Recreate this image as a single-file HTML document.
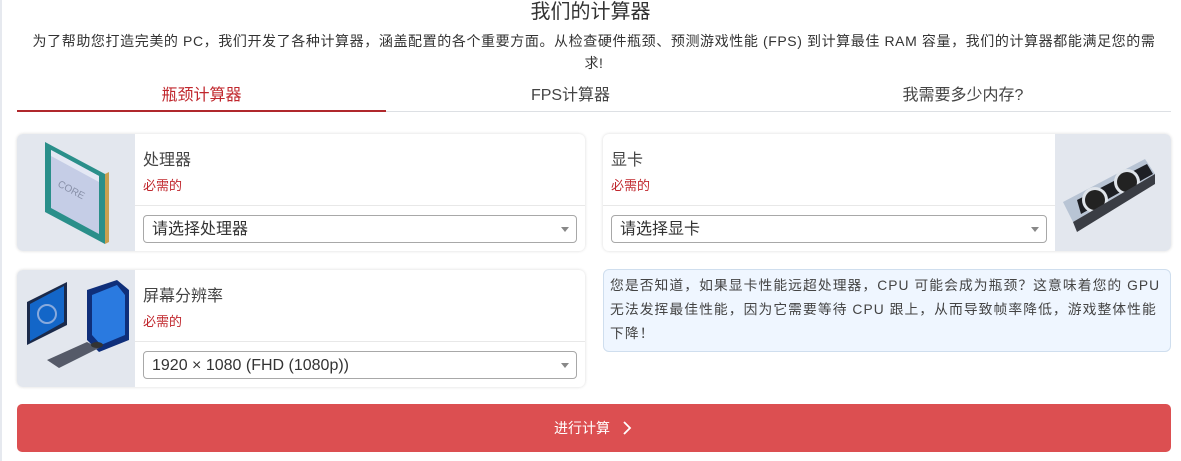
<!DOCTYPE html>
<html><head><meta charset="utf-8"><style>
*{box-sizing:border-box;margin:0;padding:0}
body{width:1181px;height:461px;overflow:hidden;background:#fff;font-family:"Liberation Sans","Noto Sans CJK SC",sans-serif;color:#333;position:relative}
.edge{position:absolute;left:0;top:0;width:2px;height:461px;background:#e6e9ef}
.title{position:absolute;top:0;left:0;width:1181px;text-align:center;font-size:20px;line-height:24px;color:#333}
.sub{position:absolute;top:30px;left:25px;width:1138px;text-align:center;font-size:14px;line-height:22px;color:#333;letter-spacing:0.6px}
.tabs{position:absolute;top:82px;left:17px;width:1154px;height:30px;border-bottom:1px solid #dde0e4;display:flex}
.tab{text-align:center;font-size:16px;line-height:28px;color:#444}
.tab.a{color:#c0272d;border-bottom:2px solid #b0282c;margin-bottom:-1px}
.card{position:absolute;width:568px;height:117px;border-radius:6px;background:#fff;box-shadow:0 0 3px rgba(0,0,0,.15);overflow:hidden}
.img{position:absolute;top:0;width:118px;height:117px;background:#e3e7ee}
.body{position:absolute;top:0;height:117px}
.lab{position:absolute;top:12px;left:8px;font-size:16px;color:#444}
.req{position:absolute;top:41px;left:8px;font-size:13px;color:#c0272d}
.div{position:absolute;top:71px;left:0;right:0;height:1px;background:#e8e8e8}
.sel{position:absolute;top:81px;left:8px;right:8px;height:28px;border:1px solid #a8a8a8;border-radius:4px;font-size:16px;line-height:28px;padding-left:8px;color:#333}
.sel:after{content:"";position:absolute;right:7px;top:11px;border:4px solid transparent;border-top:5px solid #888}
.info{position:absolute;left:603px;top:269px;width:568px;height:83px;background:#eff6ff;border:1px solid #cfdeee;border-radius:6px;padding:4px 6px;font-size:13.8px;line-height:24px;color:#444;letter-spacing:1.05px;white-space:nowrap}
.btn{position:absolute;left:17px;top:404px;width:1154px;height:48px;background:#dc4f51;border-radius:5px;color:#fff;text-align:center;font-size:14px;line-height:48px}
</style></head><body>
<div class="edge"></div>
<div class="title">我们的计算器</div>
<div class="sub">为了帮助您打造完美的 PC，我们开发了各种计算器，涵盖配置的各个重要方面。从检查硬件瓶颈、预测游戏性能 (FPS) 到计算最佳 RAM 容量，我们的计算器都能满足您的需求!</div>
<div class="tabs"><div class="tab a" style="width:369px">瓶颈计算器</div><div class="tab" style="width:369px">FPS计算器</div><div class="tab" style="width:416px">我需要多少内存?</div></div>

<div class="card" style="left:17px;top:134px">
 <div class="img" style="left:0"><svg width="118" height="117"><polygon points="28,8 88,40 88,110 28,78" fill="#2a8f8a"/><polygon points="88,40 92,38 92,108 88,110" fill="#c9a050"/><polygon points="34,16 82,42 82,100 34,74" fill="#c5cde6"/><polygon points="34,16 82,42 82,48 34,22" fill="#e4e8f4"/><text x="40" y="52" font-size="10" fill="#8890a8" transform="rotate(28 40 52)" font-family="Liberation Sans">CORE</text></svg></div>
 <div class="body" style="left:118px;right:0"><div class="lab">处理器</div><div class="req">必需的</div><div class="div"></div><div class="sel">请选择处理器</div></div>
</div>

<div class="card" style="left:603px;top:134px">
 <div class="body" style="left:0;width:452px"><div class="lab">显卡</div><div class="req">必需的</div><div class="div"></div><div class="sel">请选择显卡</div></div>
 <div class="img" style="left:452px;width:116px"><svg width="116" height="117"><polygon points="8,68 90,25 100,40 18,88" fill="#b8c4d4"/><polygon points="22,66 92,30 98,40 26,80" fill="#1d1f24"/><circle cx="40" cy="66" r="13" fill="#dfe4ea"/><circle cx="40" cy="66" r="10" fill="#222"/><circle cx="72" cy="48" r="13" fill="#dfe4ea"/><circle cx="72" cy="48" r="10" fill="#222"/><polygon points="18,88 100,40 100,50 22,98" fill="#3a3d44"/></svg></div>
</div>

<div class="card" style="left:17px;top:270px">
 <div class="img" style="left:0"><svg width="118" height="117"><polygon points="10,32 50,12 50,55 10,75" fill="#1b2a4a"/><polygon points="13,34 47,16 47,52 13,71" fill="#1366c8"/><circle cx="30" cy="44" r="9" fill="none" stroke="#8ad" stroke-width="2"/><polygon points="70,20 100,10 112,20 112,70 82,82 70,70" fill="#0f2f7a"/><polygon points="75,25 100,15 108,25 108,65 84,75 75,65" fill="#2a7ae0"/><polygon points="30,90 70,72 82,78 42,98" fill="#555a68"/><ellipse cx="80" cy="75" rx="6" ry="3" fill="#333"/></svg></div>
 <div class="body" style="left:118px;right:0"><div class="lab">屏幕分辨率</div><div class="req">必需的</div><div class="div"></div><div class="sel">1920 × 1080 (FHD (1080p))</div></div>
</div>

<div class="info">您是否知道，如果显卡性能远超处理器，CPU 可能会成为瓶颈？这意味着您的 GPU<br>无法发挥最佳性能，因为它需要等待 CPU 跟上，从而导致帧率降低，游戏整体性能<br>下降！</div>

<div class="btn">进行计算 <svg width="14" height="16" style="vertical-align:-3px;margin-left:6px"><path d="M4 2 L10 8 L4 14" fill="none" stroke="#fff" stroke-width="1.8"/></svg></div>
</body></html>
